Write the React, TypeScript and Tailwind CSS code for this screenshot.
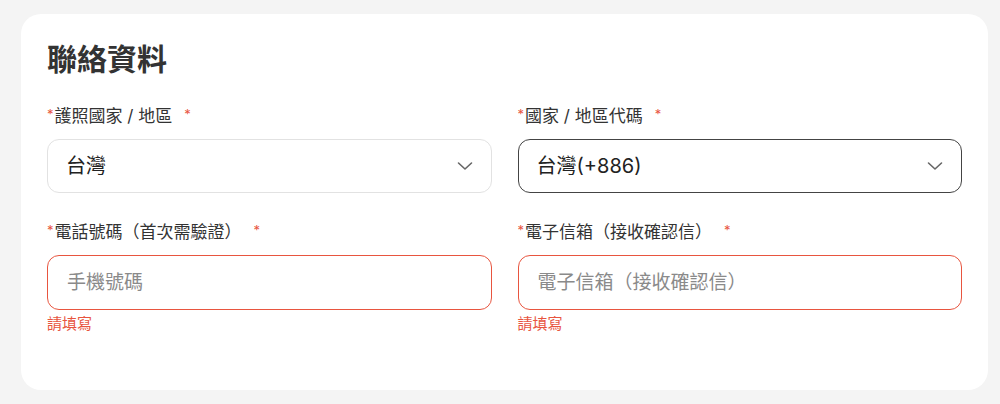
import React from 'react';

const font = { fontFamily: 'Inter, "Noto Sans CJK TC", "Noto Sans", sans-serif' };

const Label: React.FC<{ text: string }> = ({ text }) => (
  <div className="flex items-start h-6 text-[17px] leading-6 text-[#333]">
    <span className="text-[#e8553f] text-[13px] leading-5 mr-[1px]">*</span>
    <span>{text}</span>
    <span className="text-[#e8553f] text-[13px] leading-5 ml-[12px]">*</span>
  </div>
);

const Chevron = () => (
  <svg width="16" height="10" viewBox="0 0 16 10" fill="none" className="shrink-0">
    <path d="M1.5 2L8 8l6.5-6" stroke="#666" strokeWidth="1.6" strokeLinecap="round" strokeLinejoin="round" />
  </svg>
);

const Select: React.FC<{ value: string; active?: boolean }> = ({ value, active }) => (
  <div
    className={`mt-[11px] h-[54px] rounded-[12px] border flex items-center justify-between pl-[18px] pr-[18px] bg-white ${
      active ? 'border-[#444]' : 'border-[#e2e2e2]'
    }`}
  >
    <span className="text-[20px] text-[#222]">{value}</span>
    <Chevron />
  </div>
);

const Input: React.FC<{ placeholder: string }> = ({ placeholder }) => (
  <div>
    <input
      placeholder={placeholder}
      className="mt-[11px] w-full h-[55px] rounded-[12px] border border-[#e8553f] pl-[19px] text-[19px] text-[#222] placeholder:text-[#8a8a8a] outline-none bg-white"
      style={font}
    />
    <div className="mt-[4px] text-[15px] leading-5 text-[#e8553f]">請填寫</div>
  </div>
);

export default function App() {
  return (
    <div className="min-h-screen bg-[#f4f4f4] pt-[14px] pl-[21px]" style={font}>
      <div className="w-[967px] bg-white rounded-[20px] pt-[25px] pl-[26px] pr-[26px] h-[376px]">
        <h2 className="text-[30px] leading-10 font-bold text-[#333]">聯絡資料</h2>
        <div className="mt-[25px] grid grid-cols-2 gap-x-[26px] gap-y-[27px]">
          <div>
            <Label text="護照國家 / 地區" />
            <Select value="台灣" />
          </div>
          <div>
            <Label text="國家 / 地區代碼" />
            <Select value="台灣(+886)" active />
          </div>
          <div>
            <Label text="電話號碼（首次需驗證）" />
            <Input placeholder="手機號碼" />
          </div>
          <div>
            <Label text="電子信箱（接收確認信）" />
            <Input placeholder="電子信箱（接收確認信）" />
          </div>
        </div>
      </div>
    </div>
  );
}
